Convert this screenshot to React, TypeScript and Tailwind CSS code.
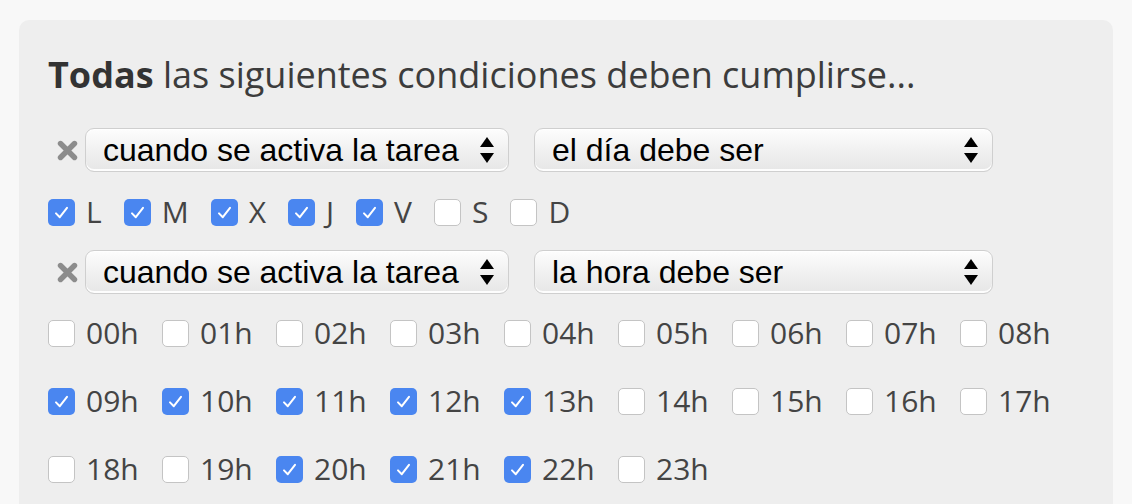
import React from 'react'

const days = [
  { label: 'L', on: true },
  { label: 'M', on: true },
  { label: 'X', on: true },
  { label: 'J', on: true },
  { label: 'V', on: true },
  { label: 'S', on: false },
  { label: 'D', on: false },
]

const onHours = [9, 10, 11, 12, 13, 20, 21, 22]

function Check({ on }: { on: boolean }) {
  if (on) {
    return (
      <span className="flex h-[27px] w-[27px] shrink-0 items-center justify-center rounded-[5px] bg-[#4a86f0]">
        <svg width="17" height="15" viewBox="0 0 17 15" fill="none">
          <path d="M3 8.4 L6.8 12.2 L14 2.8" stroke="white" strokeWidth="2" strokeLinecap="round" strokeLinejoin="round" />
        </svg>
      </span>
    )
  }
  return <span className="h-[27px] w-[27px] shrink-0 rounded-[5px] border border-[#c4c4c4] bg-white" />
}

function Select({ text, width }: { text: string; width: string }) {
  return (
    <div
      className={`${width} flex h-[44px] items-center justify-between rounded-[9px] border border-[#cfcfcf] bg-gradient-to-b from-[#fdfdfd] via-[#f1f1f1] to-[#e6e6e6] pl-[17px] pr-[14px] shadow-[inset_0_-2px_0_rgba(255,255,255,0.9),inset_0_1px_0_#fff] text-[32px] text-black`}
      style={{ fontFamily: '"Liberation Sans", Arial, sans-serif' }}
    >
      <span className="leading-none">{text}</span>
      <svg width="14" height="27" viewBox="0 0 14 27">
        <polygon points="7,0 14,10 0,10" fill="black" />
        <polygon points="0,16 14,16 7,26" fill="black" />
      </svg>
    </div>
  )
}

function Remove() {
  return (
    <span className="flex w-[37px] shrink-0 justify-center pl-[1px]">
      <svg width="21" height="21" viewBox="0 0 21 21">
        <path d="M3.5 3.5 L17.5 17.5 M17.5 3.5 L3.5 17.5" stroke="#8c8c8c" strokeWidth="5.4" strokeLinecap="round" />
      </svg>
    </span>
  )
}

export default function App() {
  const hours = Array.from({ length: 24 }, (_, i) => i)

  return (
    <div className="min-h-[504px] bg-[#f8f8f8] pt-[20px] pl-[19px]" style={{ fontFamily: '"Open Sans", sans-serif' }}>
      <div className="h-[520px] w-[1094px] rounded-t-[10px] bg-[#eeeeee] pl-[29px] pt-[35px]">
        <h2 className="text-[36px] leading-[40px] text-[#3c3c3c]">
          <span className="font-bold text-[#333]">Todas</span> las siguientes condiciones deben cumplirse...
        </h2>

        <div className="mt-[33px] flex items-center">
          <Remove />
          <Select text="cuando se activa la tarea" width="w-[424px]" />
          <div className="w-[25px]" />
          <Select text="el día debe ser" width="w-[459px]" />
        </div>

        <div className="mt-[26px] flex h-[28px] items-center">
          {days.map((d) => (
            <label key={d.label} className="mr-[22px] flex items-center gap-[11px] text-[30px] leading-none text-[#444]">
              <Check on={d.on} />
              <span>{d.label}</span>
            </label>
          ))}
        </div>

        <div className="mt-[24px] flex items-center">
          <Remove />
          <Select text="cuando se activa la tarea" width="w-[424px]" />
          <div className="w-[25px]" />
          <Select text="la hora debe ser" width="w-[459px]" />
        </div>

        <div className="mt-[5px] grid grid-cols-[repeat(9,114px)]">
          {hours.map((h) => (
            <label key={h} className="flex h-[68px] items-center gap-[11px] text-[30px] leading-none text-[#444]">
              <Check on={onHours.includes(h)} />
              <span>{String(h).padStart(2, '0')}h</span>
            </label>
          ))}
        </div>
      </div>
    </div>
  )
}
